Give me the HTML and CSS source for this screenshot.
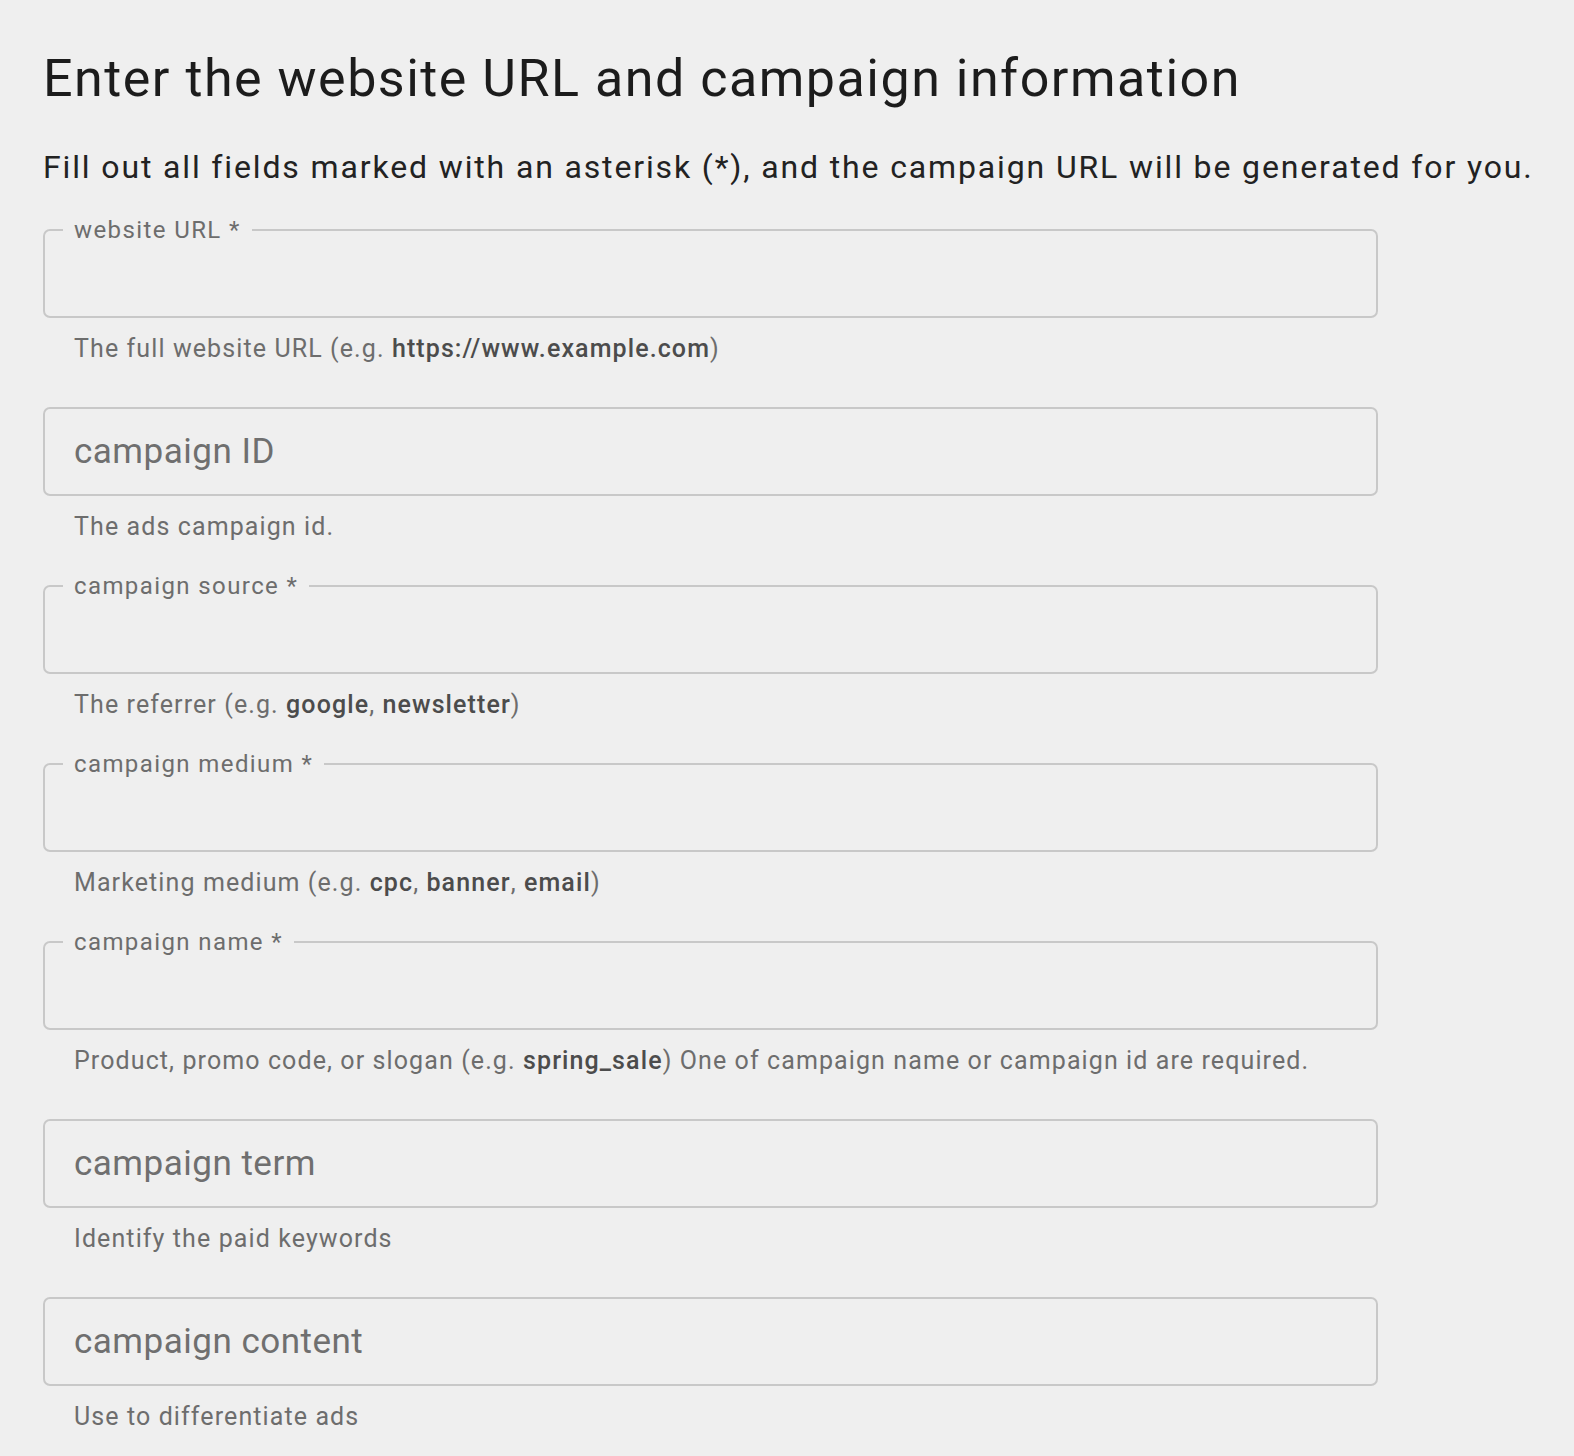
FILE: index.html
```html
<!DOCTYPE html>
<html>
<head>
<meta charset="utf-8">
<link rel="stylesheet" href="styles.css">
</head>
<body>
<main class="page">
  <h1 class="title">Enter the website URL and campaign information</h1>
  <p class="intro">Fill out all fields marked with an asterisk (*), and the campaign URL will be generated for you.</p>

  <div class="fields">
    <div class="field">
      <fieldset class="box"><legend class="label">website URL *</legend></fieldset>
      <p class="help">The full website URL (e.g. <b>https://www.example.com</b>)</p>
    </div>

    <div class="field">
      <div class="box plain"><span class="placeholder">campaign ID</span></div>
      <p class="help">The ads campaign id.</p>
    </div>

    <div class="field">
      <fieldset class="box"><legend class="label">campaign source *</legend></fieldset>
      <p class="help">The referrer (e.g. <b>google</b>, <b>newsletter</b>)</p>
    </div>

    <div class="field">
      <fieldset class="box"><legend class="label">campaign medium *</legend></fieldset>
      <p class="help">Marketing medium (e.g. <b>cpc</b>, <b>banner</b>, <b>email</b>)</p>
    </div>

    <div class="field">
      <fieldset class="box"><legend class="label">campaign name *</legend></fieldset>
      <p class="help">Product, promo code, or slogan (e.g. <b>spring_sale</b>) One of campaign name or campaign id are required.</p>
    </div>

    <div class="field">
      <div class="box plain"><span class="placeholder">campaign term</span></div>
      <p class="help">Identify the paid keywords</p>
    </div>

    <div class="field">
      <div class="box plain"><span class="placeholder">campaign content</span></div>
      <p class="help">Use to differentiate ads</p>
    </div>
  </div>
</main>
</body>
</html>
```

FILE: styles.css
```css
html, body {
  margin: 0;
  padding: 0;
  background: #efefef;
}
body {
  font-family: Roboto, "Liberation Sans", sans-serif;
  color: #1f1f1f;
}
.page {
  padding: 43px 0 0 43px;
  display: flex;
  flex-direction: column;
}
.title {
  margin: 0;
  font-size: 52px;
  font-weight: 400;
  line-height: 72px;
  letter-spacing: 1.5px;
  color: #1c1c1c;
  white-space: nowrap;
}
.intro {
  margin: 32px 0 0;
  font-size: 32px;
  line-height: 40px;
  letter-spacing: 1.86px;
  color: #222;
  white-space: nowrap;
}
.fields {
  margin-top: 31px;
  display: flex;
  flex-direction: column;
  gap: 31px;
}
.field {
  width: 1335px;
  display: flex;
  flex-direction: column;
}
.box {
  box-sizing: border-box;
  margin: 0;
  border: 2px solid #c8c8c8;
  border-radius: 7px;
  min-width: 0;
}
fieldset.box {
  height: 100px;
  padding: 0 0 0 18px;
}
.label {
  padding: 0 11px;
  font-size: 24px;
  line-height: 24px;
  letter-spacing: 1.4px;
  color: #6d6d6d;
}
.plain {
  margin-top: 11px;
  height: 89px;
  display: flex;
  align-items: center;
  padding-left: 29px;
}
.placeholder {
  font-size: 35px;
  letter-spacing: 0.5px;
  color: #6f6f6f;
}
.help {
  margin: 15px 0 0 31px;
  font-size: 25px;
  line-height: 32px;
  letter-spacing: 1.1px;
  color: #6d6d6d;
}
.help b {
  font-weight: 500;
  color: #4c4c4c;
}
```
